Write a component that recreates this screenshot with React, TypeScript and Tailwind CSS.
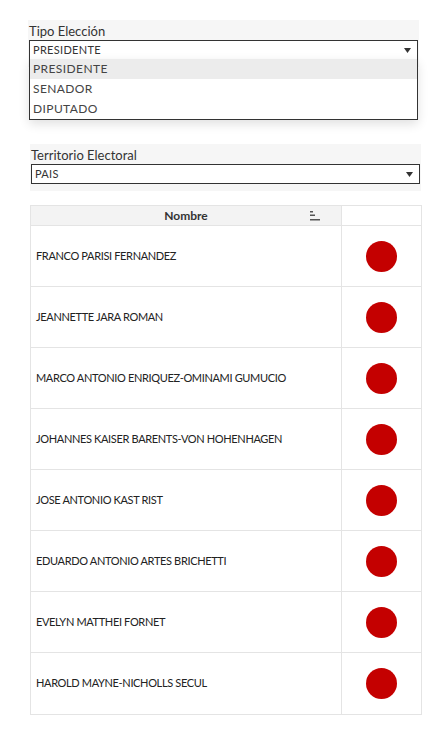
import React from "react";

const candidates = [
  "FRANCO PARISI FERNANDEZ",
  "JEANNETTE JARA ROMAN",
  "MARCO ANTONIO ENRIQUEZ-OMINAMI GUMUCIO",
  "JOHANNES KAISER BARENTS-VON HOHENHAGEN",
  "JOSE ANTONIO KAST RIST",
  "EDUARDO ANTONIO ARTES BRICHETTI",
  "EVELYN MATTHEI FORNET",
  "HAROLD MAYNE-NICHOLLS SECUL",
];

function Caret() {
  return (
    <svg width="7" height="5" viewBox="0 0 7 5" className="shrink-0">
      <path d="M0 0 H7 L3.5 5 Z" fill="#333" />
    </svg>
  );
}

function SortIcon() {
  return (
    <svg width="11" height="10" viewBox="0 0 11 10">
      <rect x="0" y="0" width="3" height="1.5" fill="#555" />
      <rect x="0" y="3.5" width="5" height="1.5" fill="#555" />
      <rect x="0" y="8" width="10" height="1.5" fill="#555" />
    </svg>
  );
}

type FilterProps = {
  label: string;
  value: string;
  options?: string[];
};

function Filter({ label, value, options }: FilterProps) {
  return (
    <div className="relative bg-[#f6f6f6] h-[47px] w-[391px]">
      <p className="text-[13px] leading-[16px] text-[#333] pt-[3px] pl-[1px]">{label}</p>
      <div className="mt-[1px] mx-[1px] h-[20px] border border-[#333] bg-white flex items-center justify-between pl-[3px] pr-[6px]">
        <span className="text-[11px] tracking-[0.3px] text-[#333]">{value}</span>
        <Caret />
      </div>
      {/* open list */}
      {options && (
        <div className="absolute left-[1px] right-[1px] top-[39px] border border-[#333] border-t-0 bg-white shadow-[0_4px_10px_rgba(0,0,0,0.12)] z-10">
          {options.map((option, i) => (
            <div
              key={option}
              className={`h-[20px] flex items-center pl-[3px] text-[12px] tracking-[0.4px] text-[#444] ${i === 0 ? "bg-[#ececec]" : ""}`}>
              {option}
            </div>
          ))}
        </div>
      )}
    </div>
  );
}

export default function App() {
  return (
    <div className="bg-white w-[446px] h-[738px] font-['Lato',sans-serif]">
      <div className="pt-[20px] pl-[28px]">
        <Filter label="Tipo Elección" value="PRESIDENTE" options={["PRESIDENTE", "SENADOR", "DIPUTADO"]} />
      </div>

      <div className="pt-[77px] pl-[30px]">
        <Filter label="Territorio Electoral" value="PAIS" />
      </div>

      {/* table */}
      <div className="mt-[14px] ml-[30px] w-[392px] border border-[#e4e4e4]">
        {/* header */}
        <div className="flex h-[20px] border-b border-[#e4e4e4]">
          <div className="w-[311px] bg-[#f3f3f3] border-r border-[#e4e4e4] flex items-center relative">
            <span className="w-full text-center text-[12px] font-bold text-[#333]">Nombre</span>
            <span className="absolute left-[279px] top-[5px]">
              <SortIcon />
            </span>
          </div>
          <div className="flex-1" />
        </div>
        {/* rows */}
        {candidates.map((name, i) => (
          <div
            key={name}
            className={`flex h-[61px] ${i < candidates.length - 1 ? "border-b border-[#e4e4e4]" : ""}`}>
            <div className="w-[311px] border-r border-[#e4e4e4] flex items-center pl-[5px]">
              <span className="text-[11px] tracking-[-0.35px] text-[#222]">{name}</span>
            </div>
            <div className="flex-1 flex items-center justify-center">
              <div className="w-[31px] h-[31px] rounded-full bg-[#c40000]" />
            </div>
          </div>
        ))}
      </div>
    </div>
  );
}
